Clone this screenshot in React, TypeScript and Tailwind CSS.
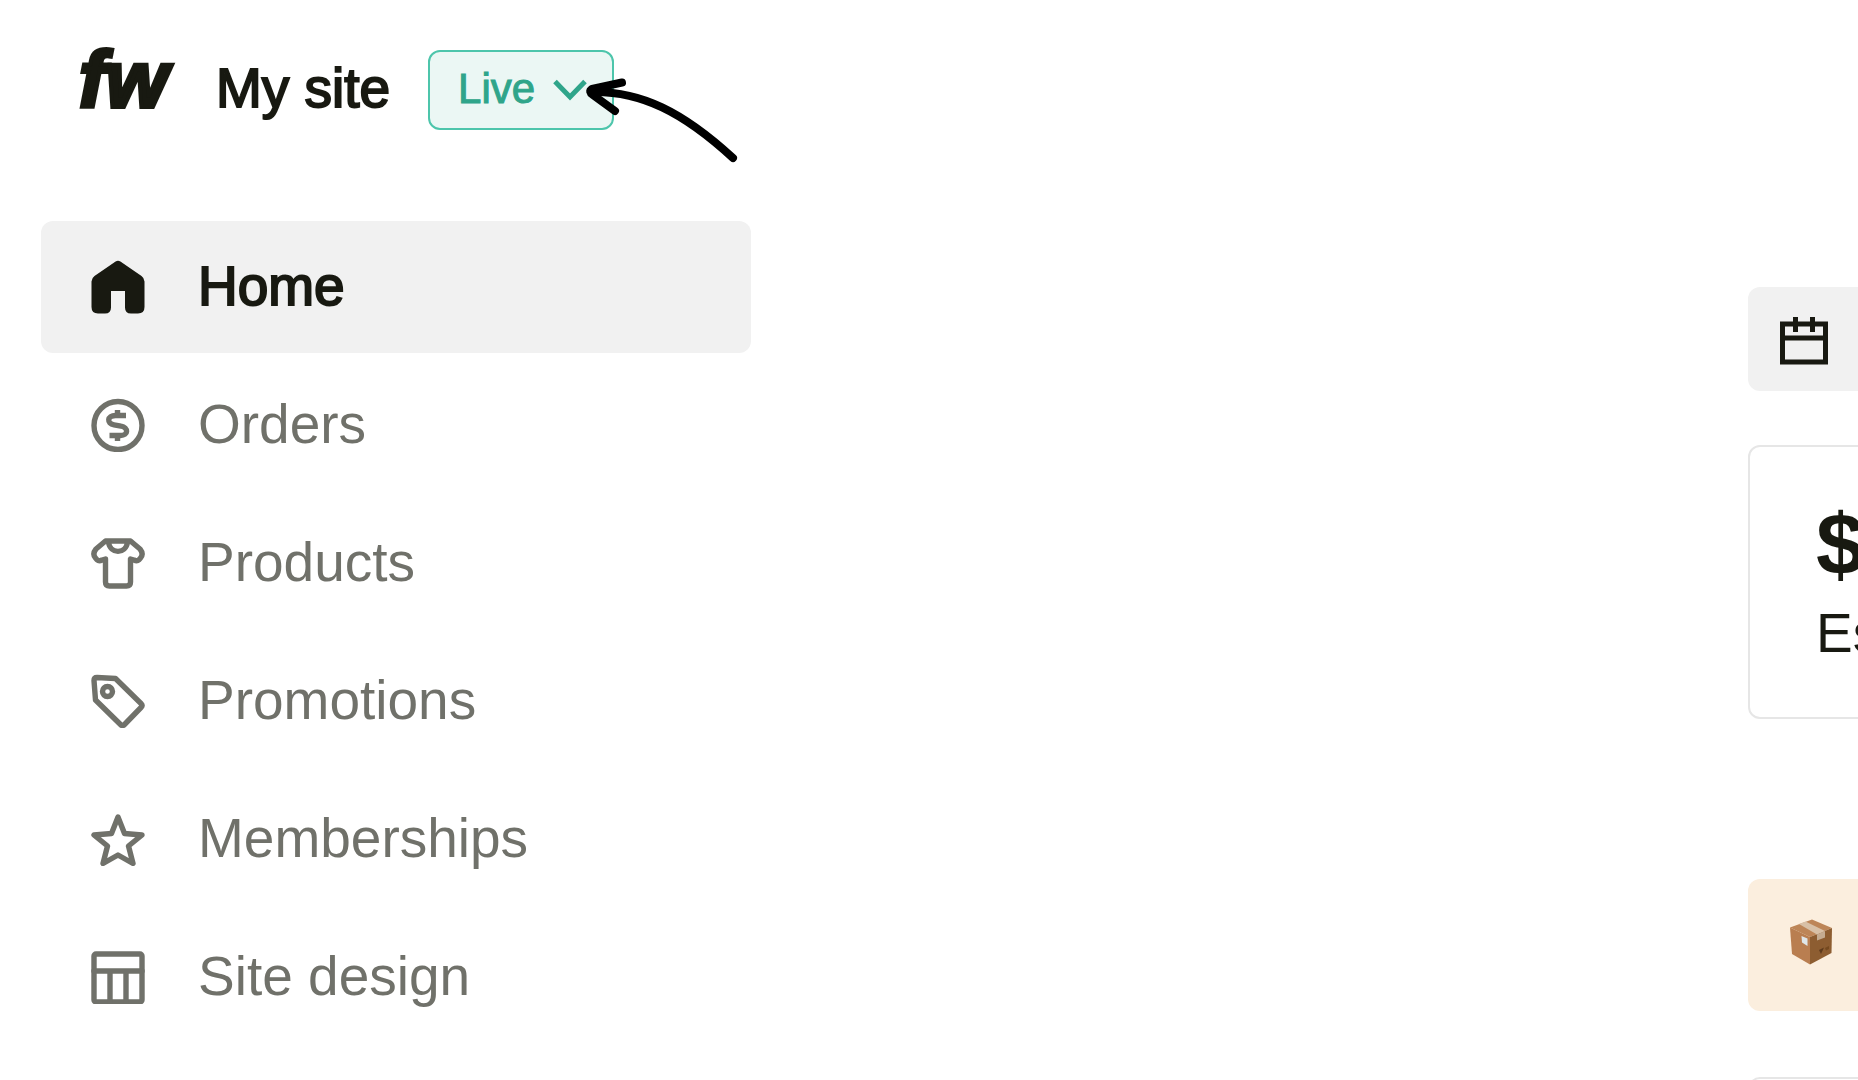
import React from "react";
import clsx from "clsx";

type IconProps = React.ComponentPropsWithoutRef<"svg">;

function Icon({ className, children, ...props }: IconProps) {
    return (
        <svg
            viewBox="0 0 54 54"
            fill="none"
            stroke="currentColor"
            strokeWidth="5.4"
            strokeLinecap="round"
            strokeLinejoin="round"
            aria-hidden="true"
            className={clsx("size-[54px] shrink-0", className)}
            {...props}
        >
            {children}
        </svg>
    );
}

function HomeIcon() {
    return (
        <Icon fill="currentColor" stroke="none">
            <path d="M24.6 1.6Q27 0 29.4 1.6L50.5 16Q53.5 18.2 53.5 21.5V47Q53.5 53.5 47 53.5H40Q34 53.5 34 47.5V31H20V47.5Q20 53.5 14 53.5H7Q.5 53.5 .5 47V21.5Q.5 18.2 3.5 16Z" />
        </Icon>
    );
}

function OrdersIcon() {
    return (
        <Icon>
            <circle cx="27" cy="27.5" r="24" />
            <path
                d="M35 17.5H24.5C16 17.5 15.5 25.5 23 26.8L30 28.2C37.5 29.5 37.5 37.5 29.5 37.5H18.5"
                strokeLinecap="butt"
            />
            <path d="M26.5 12V17.5M26.5 37V43" strokeLinecap="butt" />
        </Icon>
    );
}

function ProductsIcon() {
    return (
        <Icon>
            <path d="M14.5 5H39.5L49 13Q53 18 49.5 22L48 23.7Q46 25.5 43 24L39.5 23V46Q39.5 50 35.5 50H18.5Q14.5 50 14.5 46V23L11 24Q8 25.5 6 23.7L4.5 22Q1 18 5 13Z" />
            <path d="M17.5 6C19 18.5 35 18.5 36.5 6" />
        </Icon>
    );
}

function PromotionsIcon() {
    return (
        <Icon>
            <path d="M3 6.5Q3 3.5 6 3.5L24.5 4.5L50 29.5Q52 31.5 50 33.5L33.5 50.5Q31.5 52.5 29.5 50.5L4.5 26Z" />
            <circle cx="16.5" cy="17.5" r="5" />
        </Icon>
    );
}

function MembershipsIcon() {
    return (
        <Icon>
            <path d="M27 5L33.5 21.5L51 23L37.5 34L42 51.5L27 43L12 51.5L16.5 34L3 23L20.5 21.5Z" />
        </Icon>
    );
}

function SiteDesignIcon() {
    return (
        <Icon>
            <rect x="3" y="4" width="48" height="48" rx="2" />
            <path d="M3 21H51M19 21V52M35 21V52" />
        </Icon>
    );
}

function CalendarIcon() {
    return (
        <svg viewBox="0 0 48 48" fill="none" stroke="currentColor" strokeWidth="5" className="size-12 shrink-0" aria-hidden="true">
            <path d="M2.5 7H45.5V45H2.5ZM2.5 21H45.5M15.5 0V15M32.5 0V15" />
        </svg>
    );
}

function PackageIcon() {
    return (
        <svg viewBox="0 0 42 46" className="h-[46px] w-[42px] shrink-0" aria-hidden="true">
            <path d="M22 .5L42 9L20 18L0 8.5Z" fill="#bd8557" />
            <path d="M0 8.5L20 18V45.5L2 35Z" fill="#b97e50" />
            <path d="M42 9L20 18V45.5L41.5 34Z" fill="#8d5d31" />
            <path d="M9 5L15.5 2.5L35 12L27 15.5Z" fill="#d8c0a6" />
            <path d="M27 15.5L35 12V18.5L27 21.5Z" fill="#c4ab90" />
            <path d="M11.5 17L17.5 19.5V27L12 23.5Z" fill="#dfe6e8" />
            <path d="M29 31L34 28.5L31 35Z" fill="#5d3a1c" />
            <path d="M35 29L39 27V30L36 31.5Z" fill="#75491f" />
        </svg>
    );
}

const items = [
    { label: "Home", icon: HomeIcon, active: true },
    { label: "Orders", icon: OrdersIcon },
    { label: "Products", icon: ProductsIcon },
    { label: "Promotions", icon: PromotionsIcon },
    { label: "Memberships", icon: MembershipsIcon },
    { label: "Site design", icon: SiteDesignIcon },
];

function StatusButton() {
    return (
        <div className="relative ml-[38px]">
            <button
                type="button"
                className="flex h-20 w-[186px] items-center gap-[18px] rounded-xl border-2 border-[#4dc5ab] bg-[#ebf7f4] pl-7 text-[42px] leading-none text-[#2fa58a]"
            >
                <span className="pb-0.5 [-webkit-text-stroke:1px_currentColor]">Live</span>
                <svg viewBox="0 0 34 22" fill="none" stroke="currentColor" strokeWidth="5" className="h-[22px] w-[34px] shrink-0" aria-hidden="true">
                    <path d="M2 2.5L17 18L32 2.5" />
                </svg>
            </button>
            <svg
                viewBox="0 0 160 90"
                fill="none"
                stroke="#000"
                strokeWidth="8"
                strokeLinecap="round"
                strokeLinejoin="round"
                className="pointer-events-none absolute top-6 left-[151px] h-[90px] w-40"
                aria-hidden="true"
            >
                <path d="M13 18C62 17 104 38 154 84" />
                <path d="M43 8.500L13 15Q9 17.500 14 21L36 37" />
            </svg>
        </div>
    );
}

export default function App() {
    return (
        <div className="flex h-screen min-h-[1080px] overflow-hidden bg-white pl-[41px] font-['Liberation_Sans',Arial,sans-serif] text-[#181911]">
            <aside className="w-[710px] shrink-0">
                <header className="flex h-[221px] items-start pt-[50px] pl-[38px] whitespace-nowrap">
                    <div className="flex h-20 items-center">
                        <a href="#" className="pb-5 text-[80px] leading-none font-bold italic [-webkit-text-stroke:4px_currentColor]">
                            fw
                        </a>
                        <h1 className="ml-12 pb-1 text-[55px] leading-none [-webkit-text-stroke:2px_currentColor]">My site</h1>
                    </div>
                    <StatusButton />
                </header>
                <nav>
                    <ul className="flex flex-col gap-1.5">
                        {items.map(({ label, icon: ItemIcon, active }) => (
                            <li key={label}>
                                <a
                                    href="#"
                                    className={clsx(
                                        "flex h-[132px] items-center gap-[53px] rounded-xl pl-[50px] text-[55px] leading-none",
                                        active ? "bg-[#f1f1f1] [-webkit-text-stroke:2px_currentColor]" : "text-[#70716a]",
                                    )}
                                >
                                    <ItemIcon />
                                    <span className="pb-0.5">{label}</span>
                                </a>
                            </li>
                        ))}
                    </ul>
                </nav>
            </aside>
            <main className="min-w-0 flex-1 pt-[287px] pl-[997px]">
                <div className="min-w-[280px]">
                    <button type="button" aria-label="Choose dates" className="flex h-[104px] w-full items-center rounded-xl bg-[#f1f1f1] pt-1 pl-8">
                        <CalendarIcon />
                    </button>
                    <section className="mt-[54px] h-[274px] rounded-xl border-2 border-[#e6e6e6] pt-14 pl-[66px]">
                        <p className="text-[88px] leading-[84px] font-bold">$</p>
                        <p className="text-[55px] leading-[92px]">Es</p>
                    </section>
                    <section className="mt-40 flex h-[132px] items-center rounded-xl bg-[#fbeede] pb-1.5 pl-[42px]">
                        <PackageIcon />
                    </section>
                    <section className="mt-[66px] h-[274px] rounded-xl border-2 border-[#e6e6e6]" />
                </div>
            </main>
        </div>
    );
}
